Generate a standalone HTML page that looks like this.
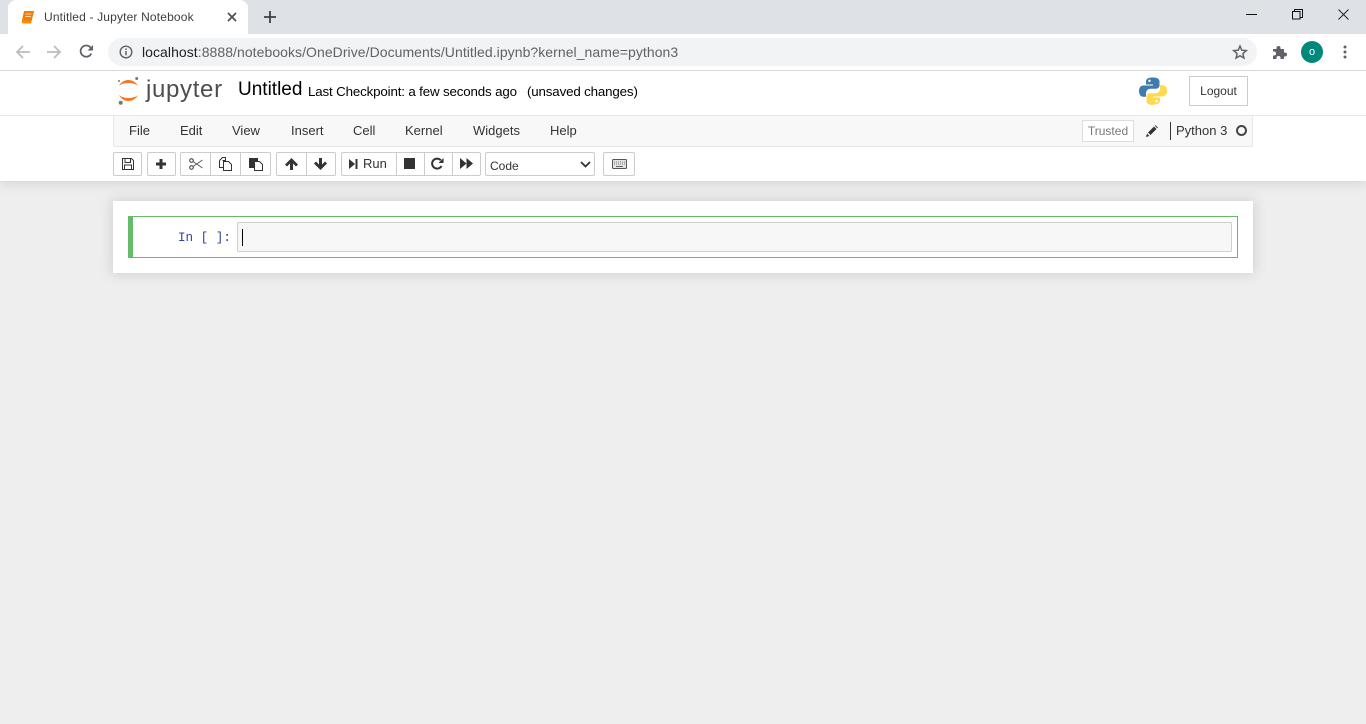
<!DOCTYPE html>
<html lang="en"><head><meta charset="utf-8"><title>Untitled - Jupyter Notebook</title>
<style>
html,body{margin:0;padding:0;width:1366px;height:724px;overflow:hidden;background:#eee;font-family:"Liberation Sans",sans-serif;}
.a{position:absolute;white-space:nowrap;}
svg{position:absolute;overflow:visible;}
.m{position:absolute;top:123px;font-size:13px;line-height:15px;color:#333;}
.b{position:absolute;top:152px;height:24px;box-sizing:border-box;background:#fff;border:1px solid #ccc;}
</style></head><body>
<!-- chrome tab strip -->
<div class="a" style="left:0;top:0;width:1366px;height:34px;background:#dee1e6;"></div>
<div class="a" style="left:8px;top:0;width:240px;height:34px;background:#fff;border-radius:8px 8px 0 0;"></div>
<div class="a" style="left:0;top:34px;width:1366px;height:36px;background:#fff;"></div>
<div class="a" style="left:0;top:70px;width:1366px;height:1px;background:#d9d9d9;"></div>
<svg style="left:21px;top:11px" width="13" height="13" viewBox="0 0 13 13"><path d="M3.500 0.500h9l-2.300 9H1.500z" fill="#f57c00" stroke="#f57c00" stroke-width="1" stroke-linejoin="round"/><path d="M1 9.500Q0 12.500 2.500 12.500h7.500l.7-2.700z" fill="#fb8c00"/><path d="M4.800 3h5.500M4.300 5.500h5.500" stroke="#ffd9a8" stroke-width="1"/></svg>
<div class="a" style="left:44px;top:10px;font-size:12px;line-height:14px;color:#3c4043;letter-spacing:.16px;">Untitled - Jupyter Notebook</div>
<svg style="left:227px;top:12px" width="10" height="10"><path d="M1 1l8 8M9 1l-8 8" stroke="#4a4d51" stroke-width="1.700"/></svg>
<svg style="left:263px;top:10px" width="14" height="14"><path d="M7 1v12M1 7h12" stroke="#3c4043" stroke-width="1.800"/></svg>
<div class="a" style="left:1246px;top:14px;width:11px;height:1px;background:#111;"></div>
<svg style="left:1292px;top:9px" width="11" height="11"><path d="M.5 2.500h7.500v7.500H.5zM2.500 2.500V.5h8v8H8" fill="none" stroke="#111"/></svg>
<svg style="left:1338px;top:9px" width="11" height="11"><path d="M.5.500l10 10M10.500.5l-10 10" stroke="#222" stroke-width="1"/></svg>
<!-- nav -->
<svg style="left:15px;top:45px" width="15" height="14"><path d="M15 7H2M8 1L2 7l6 6" fill="none" stroke="#babcbe" stroke-width="1.800"/></svg>
<svg style="left:47px;top:45px" width="15" height="14"><path d="M0 7h13M7 1l6 6-6 6" fill="none" stroke="#babcbe" stroke-width="1.800"/></svg>
<svg style="left:79px;top:44px" width="15" height="15"><path d="M12.300 9.500A5.600 5.600 0 1 1 11.500 3.500" fill="none" stroke="#5f6368" stroke-width="1.800"/><path d="M14 1v5.500H8.500z" fill="#5f6368"/></svg>
<div class="a" style="left:108px;top:38px;width:1149px;height:28px;border-radius:14px;background:#f1f3f4;"></div>
<svg style="left:119px;top:45px" width="14" height="14"><circle cx="7" cy="7" r="5.800" fill="none" stroke="#5f6368" stroke-width="1.400"/><path d="M7 6v4.300M7 3.500v1.500" stroke="#5f6368" stroke-width="1.500"/></svg>
<div class="a" style="left:142px;top:44px;font-size:14px;line-height:16px;color:#5f6368;letter-spacing:.055px;"><span style="color:#202124">localhost</span>:8888/notebooks/OneDrive/Documents/Untitled.ipynb?kernel_name=python3</div>
<svg style="left:1232px;top:44px" width="16" height="16" viewBox="0 0 16 16"><path d="M8 2l1.800 4.200 4.500.4-3.400 3 1 4.400L8 11.700 4.100 14l1-4.400-3.400-3 4.500-.4z" fill="none" stroke="#5f6368" stroke-width="1.500"/></svg>
<svg style="left:1272px;top:44px" width="16" height="16" viewBox="0 0 16 16"><path d="M1 5h3.500V4a2 2 0 0 1 4 0v1H12v3.500h1a2 2 0 0 1 0 4h-1V15H8.500v-1a2 2 0 0 0-4 0v1H1v-3.500h1a2 2 0 0 0 0-4H1z" fill="#5f6368"/></svg>
<div class="a" style="left:1301px;top:41px;width:22px;height:22px;border-radius:50%;background:#00897b;color:#fff;font-size:11px;line-height:22px;text-align:center;">o</div>
<svg style="left:1343px;top:45px" width="4" height="14"><circle cx="2" cy="2" r="1.500" fill="#5f6368"/><circle cx="2" cy="7" r="1.500" fill="#5f6368"/><circle cx="2" cy="12" r="1.500" fill="#5f6368"/></svg>

<!-- jupyter header -->
<div class="a" style="left:0;top:71px;width:1366px;height:110px;background:#fff;box-shadow:0 0 12px 1px rgba(87,87,87,.2);clip-path:inset(0 0 -30px 0);"></div>
<svg style="left:117px;top:77px" width="26" height="29" viewBox="0 0 26 29"><path d="M2 9C6 1 17 1 21 9C17 5 6 5 2 9Z" fill="#f37726"/><path d="M2 18C6 26 17 26 21 18C17 22 6 22 2 18Z" fill="#f37726"/><circle cx="19.700" cy="1.500" r="1.500" fill="#767677"/><circle cx="2" cy="4" r="1" fill="#767677"/><circle cx="3.700" cy="25.700" r="2" fill="#767677"/></svg>
<div class="a" style="left:146px;top:75px;font-size:24px;line-height:30px;color:#4e4e4e;letter-spacing:.67px;">jupyter</div>
<div class="a" style="left:238px;top:79px;font-size:19px;line-height:22px;color:#000;">Untitled</div>
<div class="a" style="left:308px;top:84px;font-size:13.330px;line-height:16px;color:#000;letter-spacing:-.155px;">Last Checkpoint: a few seconds ago</div>
<div class="a" style="left:527px;top:84px;font-size:13.330px;line-height:16px;color:#000;letter-spacing:-.155px;">(unsaved changes)</div>
<svg style="left:1139px;top:77px" width="28" height="28" viewBox="0 0 28 28"><path d="M13.800 0.500c-4.500 0-6.800 1.300-6.800 4v3h7v1H4.500C1.500 8.500 0 10.800 0 14s1.500 5.800 4.300 5.800H7v-3.500c0-2.500 2-4.500 4.500-4.500h5.500c2 0 3.500-1.500 3.500-3.500V4.500c0-2.800-2.700-4-6.700-4z" fill="#3f7cad"/><path d="M14.200 27.500c4.500 0 6.800-1.300 6.800-4v-3h-7v-1h9.500c3 0 4.500-2.300 4.500-5.500s-1.500-5.800-4.300-5.800H21v3.500c0 2.500-2 4.500-4.500 4.500H11c-2 0-3.500 1.500-3.500 3.500v4.300c0 2.800 2.700 4 6.700 4z" fill="#ffd94f"/><circle cx="10.500" cy="3.800" r="1.200" fill="#fff"/><circle cx="17.500" cy="24.200" r="1.200" fill="#fff"/></svg>
<div class="a" style="left:1189px;top:76px;width:59px;height:30px;box-sizing:border-box;border:1px solid #ccc;font-size:12px;line-height:28px;text-align:center;color:#333;">Logout</div>

<!-- menubar -->
<div class="a" style="left:113px;top:115px;width:1140px;height:32px;box-sizing:border-box;background:#f8f8f8;border:1px solid #e7e7e7;border-radius:0 0 2px 2px;"></div>
<div class="a" style="left:0;top:115px;width:1366px;height:1px;background:#e7e7e7;"></div>
<div class="m" style="left:129px">File</div>
<div class="m" style="left:180px">Edit</div>
<div class="m" style="left:232px">View</div>
<div class="m" style="left:291px">Insert</div>
<div class="m" style="left:353px">Cell</div>
<div class="m" style="left:405px">Kernel</div>
<div class="m" style="left:473px">Widgets</div>
<div class="m" style="left:550px">Help</div>
<div class="a" style="left:1082px;top:120px;width:52px;height:22px;box-sizing:border-box;border:1px solid #ddd;background:#fff;font-size:12px;line-height:20px;text-align:center;color:#777;">Trusted</div>
<svg style="left:1146px;top:125px" width="12" height="12" viewBox="0 0 12 12"><path d="M0 12l1-3.500 2.500 2.500zM2 7.500L8 1.500 10.500 4l-6 6z" fill="#333"/><path d="M8.800.8l.7-.7 2.400 2.400-.7.700z" fill="#333"/></svg>
<div class="a" style="left:1170px;top:122px;width:1px;height:18px;background:#333;"></div>
<div class="a" style="left:1176px;top:123px;font-size:13px;line-height:15px;color:#333;">Python 3</div>
<div class="a" style="left:1236px;top:125px;width:11px;height:11px;box-sizing:border-box;border:2px solid #444;border-radius:50%;"></div>

<!-- toolbar -->
<div class="b" style="left:113px;width:29px;border-radius:2px;"></div>
<svg style="left:122px;top:158px" width="12" height="12" viewBox="0 0 12 12"><path d="M.5.500h9l2 2v9H.5z" fill="none" stroke="#333"/><path d="M3 1v3.500h5.500V1M2.500 11V7h7v4" fill="none" stroke="#333"/></svg>
<div class="b" style="left:147px;width:29px;border-radius:2px;"></div>
<svg style="left:155px;top:158px" width="12" height="12"><path d="M6 1v10M1 6h10" stroke="#333" stroke-width="3"/></svg>
<div class="b" style="left:180px;width:31px;border-radius:2px 0 0 2px;"></div>
<div class="b" style="left:210px;width:31px;"></div>
<div class="b" style="left:240px;width:31px;border-radius:0 2px 2px 0;"></div>
<svg style="left:189px;top:158px" width="14" height="12" viewBox="0 0 14 12"><circle cx="2.500" cy="2.500" r="1.800" fill="none" stroke="#333"/><circle cx="2.500" cy="9.500" r="1.800" fill="none" stroke="#333"/><path d="M4 3.500L13.500 10M4 8.500L13.500 2" stroke="#555" stroke-width=".9"/></svg>
<svg style="left:219px;top:157px" width="14" height="14" viewBox="0 0 14 14"><path d="M.5 3.500L3.500.5h3v3l-3 0v0M.5 3.500v7h4" fill="none" stroke="#333"/><path d="M4.500 4.500h5l3 3v6h-8z" fill="none" stroke="#333"/></svg>
<svg style="left:249px;top:157px" width="14" height="14" viewBox="0 0 14 14"><path d="M0 1h9v3H5v7H0z" fill="#333"/><path d="M5.500 4.500h5l3 3v6h-8z" fill="#fff" stroke="#333"/></svg>
<div class="b" style="left:276px;width:31px;border-radius:2px 0 0 2px;"></div>
<div class="b" style="left:306px;width:30px;border-radius:0 2px 2px 0;"></div>
<svg style="left:285px;top:158px" width="13" height="12" viewBox="0 0 13 12"><path d="M6.500 0L13 6.500 11 8.500 8 5.500V12H5V5.500L2 8.500 0 6.500z" fill="#333"/></svg>
<svg style="left:314px;top:158px" width="13" height="12" viewBox="0 0 13 12"><path d="M6.500 12L13 5.500 11 3.500 8 6.500V0H5V6.500L2 3.500 0 5.500z" fill="#333"/></svg>
<div class="b" style="left:341px;width:56px;border-radius:2px 0 0 2px;"></div>
<div class="b" style="left:396px;width:29px;"></div>
<div class="b" style="left:424px;width:29px;"></div>
<div class="b" style="left:452px;width:29px;border-radius:0 2px 2px 0;"></div>
<svg style="left:349px;top:159px" width="10" height="10"><path d="M0 0l6 5-6 5z" fill="#333"/><path d="M7.500 0v10" stroke="#333" stroke-width="2"/></svg>
<div class="a" style="left:363px;top:156px;font-size:13px;line-height:15px;color:#333;">Run</div>
<div class="a" style="left:404px;top:158px;width:11px;height:11px;background:#333;"></div>
<svg style="left:431px;top:157px" width="13" height="13" viewBox="0 0 13 13"><path d="M10.500 9A5 5 0 1 1 9.800 3.200" fill="none" stroke="#333" stroke-width="2"/><path d="M12.500 1v5h-5z" fill="#333"/></svg>
<svg style="left:460px;top:158px" width="13" height="11"><path d="M0 0l6.500 5.500L0 11zM6.500 0L13 5.500 6.500 11z" fill="#333"/></svg>
<div class="b" style="left:485px;width:110px;border-radius:2px;"></div>
<div class="a" style="left:490px;top:159px;font-size:12px;line-height:14px;color:#333;">Code</div>
<svg style="left:580px;top:161px" width="11" height="7"><path d="M1 1l4.500 4.500L10 1" fill="none" stroke="#333" stroke-width="1.800"/></svg>
<div class="b" style="left:603px;width:32px;border-radius:2px;"></div>
<svg style="left:612px;top:159px" width="15" height="10"><rect x=".5" y=".5" width="14" height="9" rx="1" fill="#e4e4e4" stroke="#555"/><path d="M2 3h11M2 5h11" stroke="#777" stroke-dasharray="1 1"/><path d="M4 7.500h7" stroke="#666"/></svg>

<!-- notebook -->
<div class="a" style="left:113px;top:201px;width:1140px;height:72px;background:#fff;box-shadow:0 0 12px 1px rgba(87,87,87,.2);"></div>
<div class="a" style="left:128px;top:216px;width:1110px;height:42px;box-sizing:border-box;border:1px solid #66bb6a;border-left:5px solid #66bb6a;"></div>
<div class="a" style="left:178px;top:231px;font-family:'Liberation Mono',monospace;font-size:12.600px;line-height:15px;color:#303f9f;">In [ ]:</div>
<div class="a" style="left:237px;top:222px;width:995px;height:30px;box-sizing:border-box;background:#f7f7f7;border:1px solid #cfcfcf;border-radius:2px;"></div>
<div class="a" style="left:242px;top:229px;width:1px;height:17px;background:#000;"></div>
</body></html>
